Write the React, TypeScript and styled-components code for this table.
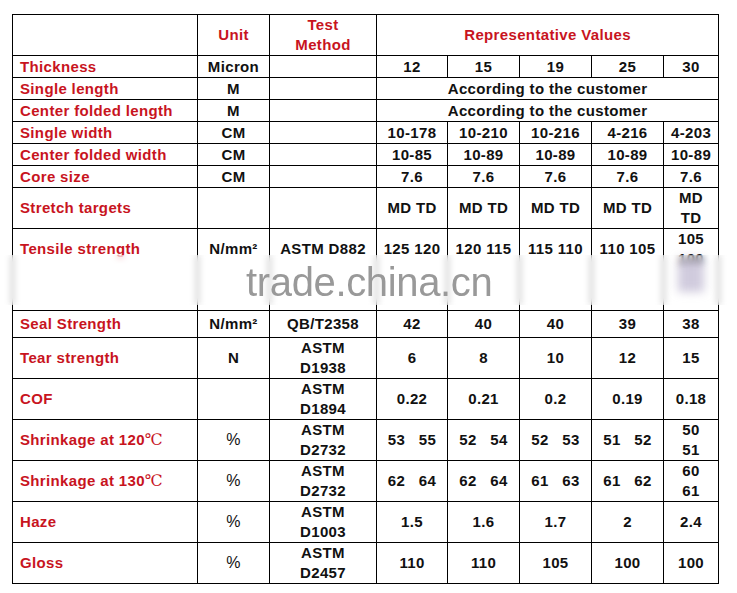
import React from "react";
import styled, { createGlobalStyle } from "styled-components";

const Global = createGlobalStyle`
  html, body { margin: 0; padding: 0; background: #fff; }
  body { font-family: "Liberation Sans", Arial, sans-serif; }
`;

const Page = styled.div`
  position: relative;
  width: 737px;
  height: 593px;
  padding: 14px 0 0 12px;
  box-sizing: border-box;
  background: #fff;
  overflow: hidden;
`;

const Table = styled.table`
  border-collapse: separate;
  border-spacing: 0;
  table-layout: fixed;
  width: 707px;
  border-top: 1px solid #000;
  border-left: 1px solid #000;
  font-family: "Liberation Sans", Arial, sans-serif;
  font-weight: bold;
  font-size: 15px;
  letter-spacing: 0.35px;
  color: #111;
`;

const Row = styled.tr<{ $h: number }>`
  height: ${(p) => p.$h}px;
`;

const Cell = styled.td<{ $top?: boolean }>`
  box-sizing: border-box;
  border-right: 1px solid #000;
  border-bottom: 1px solid #000;
  padding: 0 2px;
  text-align: center;
  vertical-align: ${(p) => (p.$top ? "top" : "middle")};
  line-height: 20px;
  white-space: pre;
`;

const Label = styled(Cell)`
  text-align: left;
  padding-left: 7px;
  color: #c8141e;
`;

const HeadCell = styled(Cell)`
  color: #c8141e;
`;

const TopBox = styled.div`
  height: 40px;
  display: flex;
  flex-direction: column;
  align-items: center;
  justify-content: center;
`;

const LabelTopBox = styled(TopBox)`
  align-items: flex-start;
`;

const Degree = styled.span`
  font-family: "DejaVu Serif", "Liberation Serif", serif;
  font-weight: normal;
  font-size: 16px;
  letter-spacing: 0;
`;

const Light = styled.span`
  font-weight: normal;
  font-size: 16px;
`;

const Blur = styled.div`
  position: absolute;
  left: 0;
  right: 0;
  top: 255px;
  height: 50px;
  backdrop-filter: blur(3px);
  -webkit-backdrop-filter: blur(3px);
  background: rgba(255, 255, 255, 0.35);
`;

const Smudge = styled.div`
  position: absolute;
  left: 678px;
  top: 258px;
  width: 26px;
  height: 34px;
  background: rgba(150, 140, 180, 0.45);
  filter: blur(5px);
`;

const Watermark = styled.div`
  position: absolute;
  left: 246px;
  top: 258px;
  font-family: "Liberation Sans", Arial, sans-serif;
  font-size: 40px;
  letter-spacing: -0.35px;
  line-height: 48px;
  color: #999999;
  white-space: nowrap;
`;

const cols = [185, 72, 107, 71, 72, 72, 72, 55];

type RowData = {
  label: React.ReactNode;
  unit: React.ReactNode;
  method: React.ReactNode;
  values?: React.ReactNode[];
  span?: string;
  h: number;
  top?: boolean;
};

const br = (a: string, b: string) => (
  <>
    {a}
    <br />
    {b}
  </>
);

const astm = (code: string) => br("ASTM", code);
const pct = <Light>%</Light>;

const rows: RowData[] = [
  { label: "Thickness", unit: "Micron", method: "", values: ["12", "15", "19", "25", "30"], h: 22 },
  { label: "Single length", unit: "M", method: "", span: "According to the customer", h: 22 },
  { label: "Center folded length", unit: "M", method: "", span: "According to the customer", h: 22 },
  { label: "Single width", unit: "CM", method: "", values: ["10-178", "10-210", "10-216", "4-216", "4-203"], h: 22 },
  { label: "Center folded width", unit: "CM", method: "", values: ["10-85", "10-89", "10-89", "10-89", "10-89"], h: 22 },
  { label: "Core size", unit: "CM", method: "", values: ["7.6", "7.6", "7.6", "7.6", "7.6"], h: 22 },
  { label: "Stretch targets", unit: "", method: "", values: ["MD TD", "MD TD", "MD TD", "MD TD", br("MD", "TD")], h: 41 },
  {
    label: "Tensile strength",
    unit: "N/mm²",
    method: "ASTM D882",
    values: ["125 120", "120 115", "115 110", "110 105", br("105", "100")],
    h: 82,
    top: true,
  },
  { label: "Seal Strength", unit: "N/mm²", method: "QB/T2358", values: ["42", "40", "40", "39", "38"], h: 27 },
  { label: "Tear strength", unit: "N", method: astm("D1938"), values: ["6", "8", "10", "12", "15"], h: 40 },
  { label: "COF", unit: "", method: astm("D1894"), values: ["0.22", "0.21", "0.2", "0.19", "0.18"], h: 41 },
  {
    label: (
      <>
        Shrinkage at 120<Degree>℃</Degree>
      </>
    ),
    unit: pct,
    method: astm("D2732"),
    values: ["53   55", "52   54", "52   53", "51   52", br("50", "51")],
    h: 41,
  },
  {
    label: (
      <>
        Shrinkage at 130<Degree>℃</Degree>
      </>
    ),
    unit: pct,
    method: astm("D2732"),
    values: ["62   64", "62   64", "61   63", "61   62", br("60", "61")],
    h: 41,
  },
  { label: "Haze", unit: pct, method: astm("D1003"), values: ["1.5", "1.6", "1.7", "2", "2.4"], h: 41 },
  { label: "Gloss", unit: pct, method: astm("D2457"), values: ["110", "110", "105", "100", "100"], h: 40 },
];

const wrapTop = (top: boolean | undefined, node: React.ReactNode) =>
  top ? <TopBox>{node}</TopBox> : node;

export default function App() {
  return (
    <>
      <Global />
      <Page>
        <Table>
          <colgroup>
            {cols.map((w, i) => (
              <col key={i} style={{ width: w }} />
            ))}
          </colgroup>
          <tbody>
            <Row $h={41}>
              <HeadCell />
              <HeadCell>Unit</HeadCell>
              <HeadCell>{br("Test", "Method")}</HeadCell>
              <HeadCell colSpan={5}>Representative Values</HeadCell>
            </Row>
            {rows.map((r, i) => (
              <Row key={i} $h={r.h}>
                <Label $top={r.top}>{r.top ? <LabelTopBox>{r.label}</LabelTopBox> : r.label}</Label>
                <Cell $top={r.top}>{wrapTop(r.top, r.unit)}</Cell>
                <Cell $top={r.top}>{wrapTop(r.top, r.method)}</Cell>
                {r.span ? (
                  <Cell colSpan={5}>{r.span}</Cell>
                ) : (
                  r.values!.map((v, j) => (
                    <Cell key={j} $top={r.top}>
                      {wrapTop(r.top, v)}
                    </Cell>
                  ))
                )}
              </Row>
            ))}
          </tbody>
        </Table>
        <Blur />
        <Smudge />
        <Watermark>trade.china.cn</Watermark>
      </Page>
    </>
  );
}
